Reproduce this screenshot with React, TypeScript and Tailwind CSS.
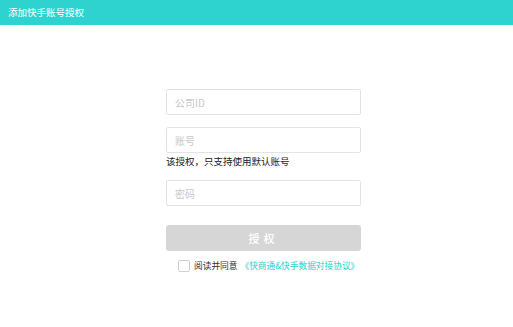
import { useState } from "react";

const font = { fontFamily: '"Noto Sans CJK SC", "Noto Sans", sans-serif' };

export default function App() {
  const [agreed, setAgreed] = useState(false);

  return (
    <div className="w-[513px] h-[327px] bg-white" style={font}>
      {/* Header */}
      <div className="h-[25px] bg-[#2ed3cf] flex items-center px-2">
        <span className="text-[9.5px] text-white">添加快手账号授权</span>
      </div>

      {/* Form */}
      <div className="pl-[166px] pt-[64px]">
        <div className="w-[195px] flex flex-col">
          <input
            placeholder="公司ID"
            className="h-[26px] border border-[#e3e3e3] rounded-[2px] px-2 text-[10px] placeholder:text-[#c8c8c8] outline-none"
          />
          <input
            placeholder="账号"
            className="mt-[12px] h-[26px] border border-[#e3e3e3] rounded-[2px] px-2 text-[10px] placeholder:text-[#c8c8c8] outline-none"
          />
          <p className="mt-[1px] text-[9.5px] leading-[14px] text-[#222]">该授权，只支持使用默认账号</p>
          <input
            placeholder="密码"
            className="mt-[12px] h-[26px] border border-[#e3e3e3] rounded-[2px] px-2 text-[10px] placeholder:text-[#c8c8c8] outline-none"
          />
          <button className="mt-[19px] h-[26px] bg-[#d6d6d6] rounded-[3px] text-white text-[11px] font-medium tracking-[4px]">
            授权
          </button>
          <label className="mt-[8px] flex items-center pl-[12px] text-[8.7px] whitespace-nowrap cursor-pointer">
            <span
              onClick={() => setAgreed(!agreed)}
              className="w-[12px] h-[12px] shrink-0 border border-[#cfcfcf] rounded-[2px] bg-white"
            />
            <span className="ml-[4px] text-[#333]">阅读并同意</span>
            <span className="ml-[3px] text-[#2ecfcb]">《快商通&amp;快手数据对接协议》</span>
          </label>
        </div>
      </div>
    </div>
  );
}
